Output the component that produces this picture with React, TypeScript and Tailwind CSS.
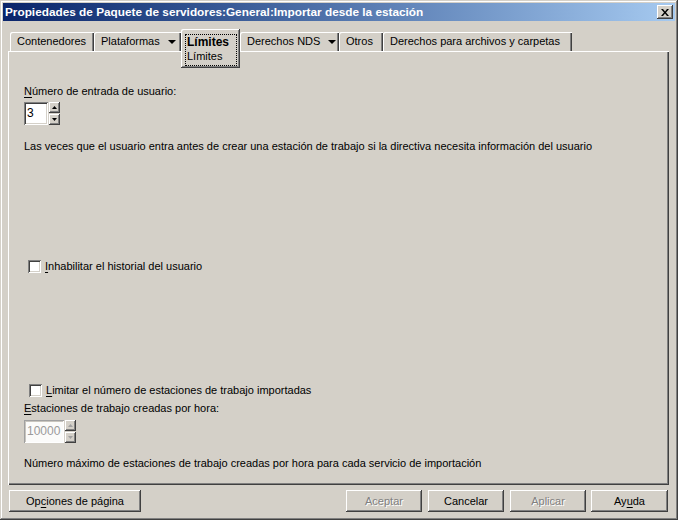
import React from 'react';

const raised =
  'shadow-[inset_-1px_-1px_#404040,inset_1px_1px_#ffffff,inset_-2px_-2px_#808080,inset_2px_2px_#d4d0c8]';
const sunken =
  'shadow-[inset_1px_1px_#808080,inset_-1px_-1px_#ffffff,inset_2px_2px_#404040,inset_-2px_-2px_#d4d0c8]';

function Mn({ children }: { children: React.ReactNode }) {
  return <span className="underline underline-offset-[2px]">{children}</span>;
}

function Arrow({ dir = 'down', color = '#000' }: { dir?: 'up' | 'down'; color?: string }) {
  return (
    <svg width="5" height="3" viewBox="0 0 5 3" className="block">
      {dir === 'down' ? (
        <path d="M0 0h5L2.5 3z" fill={color} />
      ) : (
        <path d="M0 3h5L2.5 0z" fill={color} />
      )}
    </svg>
  );
}

function Tab({ label, width, menu }: { label: string; width: number; menu?: boolean }) {
  return (
    <div
      style={{ width }}
      className="mt-[3px] h-[19px] flex items-center pl-[7px] rounded-tl-[2px] shadow-[inset_1px_1px_#ffffff,inset_-1px_0_#404040,inset_-2px_0_#808080]"
    >
      <span>{label}</span>
      {menu && (
        <svg width="8" height="4" viewBox="0 0 8 4" className="ml-[8px]">
          <path d="M0 0h8L4 4z" fill="#000" />
        </svg>
      )}
    </div>
  );
}

function Spinner({ value, width, disabled }: { value: string; width: number; disabled?: boolean }) {
  return (
    <div className="flex items-start">
      <div
        style={{ width }}
        className={
          'h-[23px] flex items-center pl-[3px] text-[12px] ' +
          (disabled
            ? 'bg-[#fbfbfa] text-[#9a9a9a] shadow-[inset_1px_1px_#a0a0a0,inset_-1px_-1px_#ffffff,inset_2px_2px_#c8c5be]'
            : 'bg-white text-black ' + sunken)
        }
      >
        {value}
      </div>
      <div className="ml-[1px] flex flex-col gap-[1px]">
        {(['up', 'down'] as const).map((d) => (
          <div key={d} className={'w-[11px] h-[11px] flex items-center justify-center bg-[#d4d0c8] ' + raised}>
            <Arrow dir={d} color={disabled ? '#a0a0a0' : '#000'} />
          </div>
        ))}
      </div>
    </div>
  );
}

function Check({ children }: { children: React.ReactNode }) {
  return (
    <div className="flex items-center h-[13px]">
      <div className={'w-[13px] h-[13px] bg-white ' + sunken} />
      <span className="ml-[4px]">{children}</span>
    </div>
  );
}

function Btn({ children, width, disabled, ml = 0 }: { children: React.ReactNode; width: number; disabled?: boolean; ml?: number }) {
  return (
    <div
      style={{ width, marginLeft: ml }}
      className={
        'h-[22px] flex items-center justify-center ' +
        raised +
        (disabled ? ' text-[#808080] [text-shadow:1px_1px_0_#ffffff]' : '')
      }
    >
      {children}
    </div>
  );
}

export default function App() {
  return (
    <div className="w-[678px] h-[520px] bg-[#d4d0c8] p-[3px] text-[11px] leading-[13px] text-black font-[family-name:'Liberation_Sans',Arial,sans-serif] shadow-[inset_-1px_-1px_#404040,inset_1px_1px_#d4d0c8,inset_-2px_-2px_#808080,inset_2px_2px_#ffffff]">
      {/* title bar */}
      <div className="h-[18px] flex items-center justify-between pl-[2px] pr-[2px] bg-gradient-to-r from-[#0a246a] to-[#a6caf0]">
        <span className="text-white font-bold text-[11.8px]">
          Propiedades de Paquete de servidores:General:Importar desde la estación
        </span>
        <div className={'w-[16px] h-[14px] flex items-center justify-center bg-[#d4d0c8] ' + raised}>
          <svg width="8" height="7" viewBox="0 0 8 7">
            <path d="M0 0h2l2 2.5L6 0h2L5 3.5 8 7H6L4 4.5 2 7H0l3-3.5z" fill="#000" />
          </svg>
        </div>
      </div>

      {/* tabs */}
      <div className="mt-[8px] h-[22px] flex items-start pl-[7px]">
        <Tab label="Contenedores" width={84} />
        <Tab label="Plataformas" width={87} menu />
        <div className="relative z-10 w-[59px] h-[39px] pt-[5px] pl-[4px] pr-[3px] bg-[#d4d0c8] rounded-tl-[2px] shadow-[inset_-1px_-1px_#404040,inset_1px_1px_#ffffff,inset_-2px_-2px_#808080]">
          <div className="border border-dotted border-black pl-[1px] pb-[2px]">
            <div className="font-bold text-[12px] leading-[14px]">Límites</div>
            <div className="leading-[14px]">Límites</div>
          </div>
        </div>
        <Tab label="Derechos NDS" width={99} menu />
        <Tab label="Otros" width={44} />
        <Tab label="Derechos para archivos y carpetas" width={189} />
      </div>

      {/* page */}
      <div className="ml-[5px] w-[661px] h-[434px] pl-[16px] pt-[34px] shadow-[inset_1px_1px_#ffffff,inset_-1px_-1px_#404040,inset_-2px_-2px_#808080]">
        <div>
          <Mn>N</Mn>úmero de entrada de usuario:
        </div>
        <div className="mt-[4px]">
          <Spinner value="3" width={24} />
        </div>
        <div className="mt-[15px]">
          Las veces que el usuario entra antes de crear una estación de trabajo si la directiva necesita información del usuario
        </div>

        <div className="mt-[107px] ml-[4px]">
          <Check>
            <Mn>I</Mn>nhabilitar el historial del usuario
          </Check>
        </div>

        <div className="mt-[111px] ml-[5px]">
          <Check>
            <Mn>L</Mn>imitar el número de estaciones de trabajo importadas
          </Check>
        </div>
        <div className="mt-[5px]">
          <Mn>E</Mn>staciones de trabajo creadas por hora:
        </div>
        <div className="mt-[5px]">
          <Spinner value="10000" width={40} disabled />
        </div>
        <div className="mt-[14px]">
          Número máximo de estaciones de trabajo creadas por hora para cada servicio de importación
        </div>
      </div>

      {/* buttons */}
      <div className="mt-[5px] ml-[6px] flex">
        <Btn width={132}>
          Op<Mn>c</Mn>iones de página
        </Btn>
        <Btn width={76} ml={205} disabled>
          Aceptar
        </Btn>
        <Btn width={76} ml={6}>
          Cancelar
        </Btn>
        <Btn width={76} ml={6} disabled>
          Aplicar
        </Btn>
        <Btn width={77} ml={5}>
          Ay<Mn>u</Mn>da
        </Btn>
      </div>
    </div>
  );
}
